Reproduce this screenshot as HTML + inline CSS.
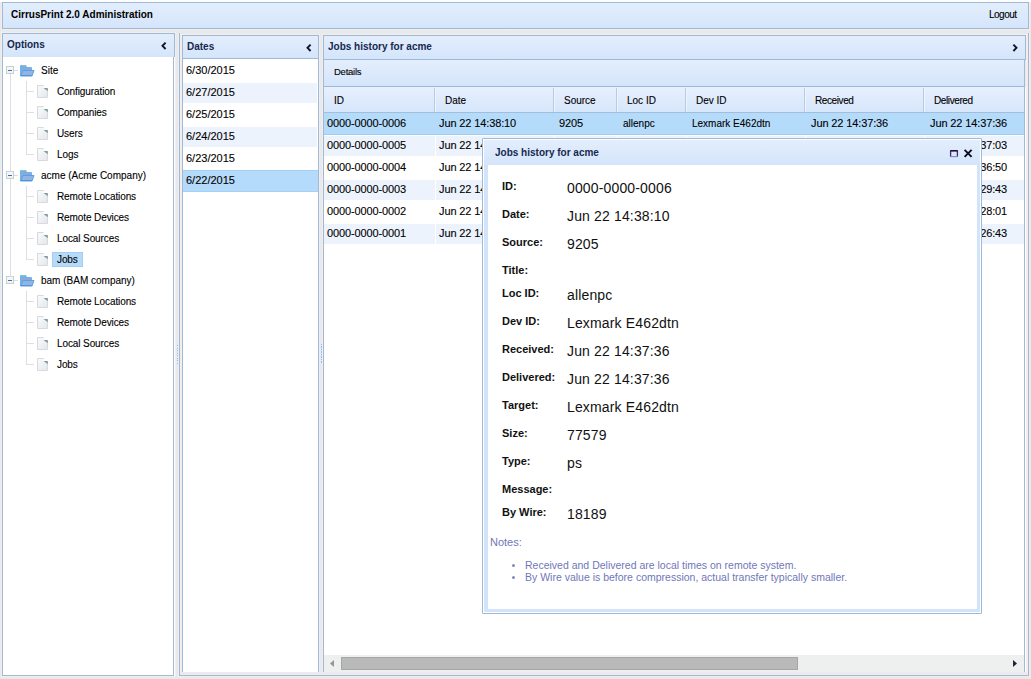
<!DOCTYPE html>
<html><head><meta charset="utf-8"><title>CirrusPrint 2.0 Administration</title>
<style>html,body{margin:0;padding:0;} body{width:1031px;height:679px;overflow:hidden;position:relative;background:#e9e9e9;font-family:'Liberation Sans', sans-serif;}</style>
</head><body>
<div style="position:absolute;left:0px;top:0px;width:1031px;height:2px;background:#fdfdfd"></div>
<div style="position:absolute;left:1px;top:2px;width:1px;height:27px;background:#f1eeed"></div>
<div style="position:absolute;left:1029px;top:2px;width:1px;height:27px;background:#f1eeed"></div>
<div style="position:absolute;left:1px;top:29px;width:1029px;height:1px;background:#f1eeed"></div>
<div style="position:absolute;left:1px;top:32px;width:175px;height:1px;background:#f1eeed"></div>
<div style="position:absolute;left:1px;top:33px;width:1px;height:644px;background:#f1eeed"></div>
<div style="position:absolute;left:175px;top:33px;width:1px;height:644px;background:#f1eeed"></div>
<div style="position:absolute;left:1px;top:676px;width:175px;height:1px;background:#f1eeed"></div>
<div style="position:absolute;left:178px;top:33px;width:1px;height:644px;background:#f1eeed"></div>
<div style="position:absolute;left:180px;top:33px;width:1px;height:642px;background:#f1eeed"></div>
<div style="position:absolute;left:181px;top:34px;width:139px;height:1px;background:#f1eeed"></div>
<div style="position:absolute;left:181px;top:35px;width:1px;height:638px;background:#f1eeed"></div>
<div style="position:absolute;left:319px;top:35px;width:1px;height:638px;background:#f1eeed"></div>
<div style="position:absolute;left:322px;top:34px;width:705px;height:1px;background:#f1eeed"></div>
<div style="position:absolute;left:322px;top:35px;width:1px;height:638px;background:#f1eeed"></div>
<div style="position:absolute;left:1026px;top:35px;width:1px;height:638px;background:#f1eeed"></div>
<div style="position:absolute;left:1027px;top:33px;width:1px;height:642px;background:#f1eeed"></div>
<div style="position:absolute;left:1029px;top:33px;width:1px;height:644px;background:#f1eeed"></div>
<div style="position:absolute;left:180px;top:674px;width:848px;height:1px;background:#f1eeed"></div>
<div style="position:absolute;left:178px;top:676px;width:852px;height:1px;background:#f1eeed"></div>
<div style="position:absolute;left:180px;top:672px;width:848px;height:1px;background:#ececec"></div>
<div style="position:absolute;left:177px;top:345px;width:1px;height:20px;background:repeating-linear-gradient(to bottom,#8dbdec 0 1.3px,transparent 1.3px 2.5px)"></div>
<div style="position:absolute;left:321px;top:344px;width:1px;height:20px;background:repeating-linear-gradient(to bottom,#8dbdec 0 1.3px,transparent 1.3px 2.5px)"></div>
<div style="position:absolute;left:2px;top:2px;width:1027px;height:27px;box-sizing:border-box;border:1px solid #9fbad8;background:linear-gradient(to bottom,#e3eefc,#d4e5fb)"></div>
<div style="position:absolute;left:11px;top:10px;font:bold 10px/10px 'Liberation Sans', sans-serif;color:#000;white-space:nowrap;">CirrusPrint 2.0 Administration</div>
<div style="position:absolute;left:989px;top:10px;font:normal 10px/10px 'Liberation Sans', sans-serif;color:#000;white-space:nowrap;-webkit-text-stroke:0.1px #000;letter-spacing:-0.5px">Logout</div>
<div style="position:absolute;left:2px;top:33px;width:173px;height:24px;box-sizing:border-box;border:1px solid #9fbad8;border-bottom:none;background:linear-gradient(to bottom,#e3eefc,#d4e5fb)"></div>
<div style="position:absolute;left:7px;top:40px;font:bold 10px/10px 'Liberation Sans', sans-serif;color:#16284f;white-space:nowrap;">Options</div>
<div style="position:absolute;left:2px;top:57px;width:172px;height:619px;box-sizing:border-box;border:1px solid #9fbad8;border-top:none;background:#fff"></div>
<div style="position:absolute;left:174px;top:57px;width:1px;height:619px;background:#ffffff"></div>
<div style="position:absolute;left:179px;top:33px;width:1px;height:643px;background:#9fbad8"></div>
<div style="position:absolute;left:179px;top:675px;width:850px;height:1px;background:#9fbad8"></div>
<div style="position:absolute;left:1028px;top:33px;width:1px;height:643px;background:#9fbad8"></div>
<div style="position:absolute;left:182px;top:35px;width:137px;height:24px;box-sizing:border-box;border:1px solid #9fbad8;background:linear-gradient(to bottom,#e3eefc,#d4e5fb)"></div>
<div style="position:absolute;left:187px;top:42px;font:bold 10px/10px 'Liberation Sans', sans-serif;color:#16284f;white-space:nowrap;">Dates</div>
<div style="position:absolute;left:182px;top:59px;width:137px;height:613px;box-sizing:border-box;border:1px solid #9fbad8;border-top:none;border-bottom:none;background:#fff"></div>
<div style="position:absolute;left:186px;top:65px;font:normal 11px/11px 'Liberation Sans', sans-serif;color:#000;white-space:nowrap;-webkit-text-stroke:0.1px #000;">6/30/2015</div>
<div style="position:absolute;left:183px;top:83px;width:134px;height:20px;background:#ecf3fd"></div>
<div style="position:absolute;left:186px;top:87px;font:normal 11px/11px 'Liberation Sans', sans-serif;color:#000;white-space:nowrap;-webkit-text-stroke:0.1px #000;">6/27/2015</div>
<div style="position:absolute;left:186px;top:109px;font:normal 11px/11px 'Liberation Sans', sans-serif;color:#000;white-space:nowrap;-webkit-text-stroke:0.1px #000;">6/25/2015</div>
<div style="position:absolute;left:183px;top:127px;width:134px;height:20px;background:#ecf3fd"></div>
<div style="position:absolute;left:186px;top:131px;font:normal 11px/11px 'Liberation Sans', sans-serif;color:#000;white-space:nowrap;-webkit-text-stroke:0.1px #000;">6/24/2015</div>
<div style="position:absolute;left:186px;top:153px;font:normal 11px/11px 'Liberation Sans', sans-serif;color:#000;white-space:nowrap;-webkit-text-stroke:0.1px #000;">6/23/2015</div>
<div style="position:absolute;left:183px;top:170px;width:135px;height:22px;background:#b5dbfb"></div>
<div style="position:absolute;left:183px;top:170px;width:135px;height:1px;background:#a3d0f4"></div>
<div style="position:absolute;left:183px;top:191px;width:135px;height:1px;background:#a3d0f4"></div>
<div style="position:absolute;left:186px;top:175px;font:normal 11px/11px 'Liberation Sans', sans-serif;color:#000;white-space:nowrap;-webkit-text-stroke:0.1px #000;">6/22/2015</div>
<div style="position:absolute;left:323px;top:35px;width:703px;height:25px;box-sizing:border-box;border:1px solid #9fbad8;background:linear-gradient(to bottom,#e3eefc,#d4e5fb)"></div>
<div style="position:absolute;left:328px;top:42px;font:bold 10px/10px 'Liberation Sans', sans-serif;color:#16284f;white-space:nowrap;">Jobs history for acme</div>
<div style="position:absolute;left:323px;top:60px;width:702px;height:27px;box-sizing:border-box;border:1px solid #9fbad8;border-top:none;background:linear-gradient(to bottom,#e3eefc,#d4e5fb)"></div>
<div style="position:absolute;left:334px;top:67px;font:normal 9.5px/9.5px 'Liberation Sans', sans-serif;color:#000;white-space:nowrap;-webkit-text-stroke:0.1px #000;letter-spacing:-0.25px">Details</div>
<div style="position:absolute;left:323px;top:87px;width:702px;height:585px;box-sizing:border-box;border-left:1px solid #9fbad8;border-right:1px solid #9fbad8;background:#fff"></div>
<div style="position:absolute;left:1025px;top:87px;width:1px;height:585px;background:#fff"></div>
<div style="position:absolute;left:324px;top:87px;width:700px;height:26px;background:linear-gradient(to bottom,#e7f0fd,#d6e6fb);border-bottom:1px solid #a3bedc;box-sizing:border-box"></div>
<div style="position:absolute;left:334px;top:96px;font:normal 10px/10px 'Liberation Sans', sans-serif;color:#000;white-space:nowrap;-webkit-text-stroke:0.1px #000;">ID</div>
<div style="position:absolute;left:434px;top:88px;width:1px;height:24px;background:#b9cbe3"></div>
<div style="position:absolute;left:435px;top:88px;width:1px;height:24px;background:#eef4fc"></div>
<div style="position:absolute;left:445px;top:96px;font:normal 10px/10px 'Liberation Sans', sans-serif;color:#000;white-space:nowrap;-webkit-text-stroke:0.1px #000;">Date</div>
<div style="position:absolute;left:553px;top:88px;width:1px;height:24px;background:#b9cbe3"></div>
<div style="position:absolute;left:554px;top:88px;width:1px;height:24px;background:#eef4fc"></div>
<div style="position:absolute;left:564px;top:96px;font:normal 10px/10px 'Liberation Sans', sans-serif;color:#000;white-space:nowrap;-webkit-text-stroke:0.1px #000;">Source</div>
<div style="position:absolute;left:616px;top:88px;width:1px;height:24px;background:#b9cbe3"></div>
<div style="position:absolute;left:617px;top:88px;width:1px;height:24px;background:#eef4fc"></div>
<div style="position:absolute;left:627px;top:96px;font:normal 10px/10px 'Liberation Sans', sans-serif;color:#000;white-space:nowrap;-webkit-text-stroke:0.1px #000;">Loc ID</div>
<div style="position:absolute;left:685px;top:88px;width:1px;height:24px;background:#b9cbe3"></div>
<div style="position:absolute;left:686px;top:88px;width:1px;height:24px;background:#eef4fc"></div>
<div style="position:absolute;left:696px;top:96px;font:normal 10px/10px 'Liberation Sans', sans-serif;color:#000;white-space:nowrap;-webkit-text-stroke:0.1px #000;">Dev ID</div>
<div style="position:absolute;left:804px;top:88px;width:1px;height:24px;background:#b9cbe3"></div>
<div style="position:absolute;left:805px;top:88px;width:1px;height:24px;background:#eef4fc"></div>
<div style="position:absolute;left:815px;top:96px;font:normal 10px/10px 'Liberation Sans', sans-serif;color:#000;white-space:nowrap;-webkit-text-stroke:0.1px #000;letter-spacing:-0.4px">Received</div>
<div style="position:absolute;left:923px;top:88px;width:1px;height:24px;background:#b9cbe3"></div>
<div style="position:absolute;left:924px;top:88px;width:1px;height:24px;background:#eef4fc"></div>
<div style="position:absolute;left:934px;top:96px;font:normal 10px/10px 'Liberation Sans', sans-serif;color:#000;white-space:nowrap;-webkit-text-stroke:0.1px #000;letter-spacing:-0.4px">Delivered</div>
<div style="position:absolute;left:324px;top:113px;width:700px;height:22px;background:#b5dbfb"></div>
<div style="position:absolute;left:324px;top:134px;width:700px;height:1px;background:#9fcdf0"></div>
<div style="position:absolute;left:327px;top:118px;font:normal 11px/11px 'Liberation Sans', sans-serif;color:#000;white-space:nowrap;-webkit-text-stroke:0.1px #000;letter-spacing:-0.12px">0000-0000-0006</div>
<div style="position:absolute;left:439px;top:118px;font:normal 11px/11px 'Liberation Sans', sans-serif;color:#000;white-space:nowrap;-webkit-text-stroke:0.1px #000;letter-spacing:-0.12px">Jun 22 14:38:10</div>
<div style="position:absolute;left:559px;top:118px;font:normal 11px/11px 'Liberation Sans', sans-serif;color:#000;white-space:nowrap;-webkit-text-stroke:0.1px #000;letter-spacing:-0.12px">9205</div>
<div style="position:absolute;left:623px;top:119px;font:normal 10px/10px 'Liberation Sans', sans-serif;color:#000;white-space:nowrap;-webkit-text-stroke:0.1px #000;">allenpc</div>
<div style="position:absolute;left:692px;top:119px;font:normal 10px/10px 'Liberation Sans', sans-serif;color:#000;white-space:nowrap;-webkit-text-stroke:0.1px #000;">Lexmark E462dtn</div>
<div style="position:absolute;left:811px;top:118px;font:normal 11px/11px 'Liberation Sans', sans-serif;color:#000;white-space:nowrap;-webkit-text-stroke:0.1px #000;letter-spacing:-0.12px">Jun 22 14:37:36</div>
<div style="position:absolute;left:930px;top:118px;font:normal 11px/11px 'Liberation Sans', sans-serif;color:#000;white-space:nowrap;-webkit-text-stroke:0.1px #000;letter-spacing:-0.12px">Jun 22 14:37:36</div>
<div style="position:absolute;left:324px;top:136px;width:700px;height:20px;background:#ecf3fd"></div>
<div style="position:absolute;left:327px;top:140px;font:normal 11px/11px 'Liberation Sans', sans-serif;color:#000;white-space:nowrap;-webkit-text-stroke:0.1px #000;letter-spacing:-0.12px">0000-0000-0005</div>
<div style="position:absolute;left:435px;top:136px;width:1px;height:20px;background:#ffffff"></div>
<div style="position:absolute;left:439px;top:140px;font:normal 11px/11px 'Liberation Sans', sans-serif;color:#000;white-space:nowrap;-webkit-text-stroke:0.1px #000;letter-spacing:-0.12px">Jun 22 14:37:10</div>
<div style="position:absolute;left:554px;top:136px;width:1px;height:20px;background:#ffffff"></div>
<div style="position:absolute;left:559px;top:140px;font:normal 11px/11px 'Liberation Sans', sans-serif;color:#000;white-space:nowrap;-webkit-text-stroke:0.1px #000;letter-spacing:-0.12px">9205</div>
<div style="position:absolute;left:617px;top:136px;width:1px;height:20px;background:#ffffff"></div>
<div style="position:absolute;left:623px;top:141px;font:normal 10px/10px 'Liberation Sans', sans-serif;color:#000;white-space:nowrap;-webkit-text-stroke:0.1px #000;">allenpc</div>
<div style="position:absolute;left:686px;top:136px;width:1px;height:20px;background:#ffffff"></div>
<div style="position:absolute;left:692px;top:141px;font:normal 10px/10px 'Liberation Sans', sans-serif;color:#000;white-space:nowrap;-webkit-text-stroke:0.1px #000;">Lexmark E462dtn</div>
<div style="position:absolute;left:805px;top:136px;width:1px;height:20px;background:#ffffff"></div>
<div style="position:absolute;left:811px;top:140px;font:normal 11px/11px 'Liberation Sans', sans-serif;color:#000;white-space:nowrap;-webkit-text-stroke:0.1px #000;letter-spacing:-0.12px">Jun 22 14:37:03</div>
<div style="position:absolute;left:924px;top:136px;width:1px;height:20px;background:#ffffff"></div>
<div style="position:absolute;left:930px;top:140px;font:normal 11px/11px 'Liberation Sans', sans-serif;color:#000;white-space:nowrap;-webkit-text-stroke:0.1px #000;letter-spacing:-0.12px">Jun 22 14:37:03</div>
<div style="position:absolute;left:327px;top:162px;font:normal 11px/11px 'Liberation Sans', sans-serif;color:#000;white-space:nowrap;-webkit-text-stroke:0.1px #000;letter-spacing:-0.12px">0000-0000-0004</div>
<div style="position:absolute;left:435px;top:158px;width:1px;height:20px;background:#ffffff"></div>
<div style="position:absolute;left:439px;top:162px;font:normal 11px/11px 'Liberation Sans', sans-serif;color:#000;white-space:nowrap;-webkit-text-stroke:0.1px #000;letter-spacing:-0.12px">Jun 22 14:36:10</div>
<div style="position:absolute;left:554px;top:158px;width:1px;height:20px;background:#ffffff"></div>
<div style="position:absolute;left:559px;top:162px;font:normal 11px/11px 'Liberation Sans', sans-serif;color:#000;white-space:nowrap;-webkit-text-stroke:0.1px #000;letter-spacing:-0.12px">9205</div>
<div style="position:absolute;left:617px;top:158px;width:1px;height:20px;background:#ffffff"></div>
<div style="position:absolute;left:623px;top:163px;font:normal 10px/10px 'Liberation Sans', sans-serif;color:#000;white-space:nowrap;-webkit-text-stroke:0.1px #000;">allenpc</div>
<div style="position:absolute;left:686px;top:158px;width:1px;height:20px;background:#ffffff"></div>
<div style="position:absolute;left:692px;top:163px;font:normal 10px/10px 'Liberation Sans', sans-serif;color:#000;white-space:nowrap;-webkit-text-stroke:0.1px #000;">Lexmark E462dtn</div>
<div style="position:absolute;left:805px;top:158px;width:1px;height:20px;background:#ffffff"></div>
<div style="position:absolute;left:811px;top:162px;font:normal 11px/11px 'Liberation Sans', sans-serif;color:#000;white-space:nowrap;-webkit-text-stroke:0.1px #000;letter-spacing:-0.12px">Jun 22 14:36:50</div>
<div style="position:absolute;left:924px;top:158px;width:1px;height:20px;background:#ffffff"></div>
<div style="position:absolute;left:930px;top:162px;font:normal 11px/11px 'Liberation Sans', sans-serif;color:#000;white-space:nowrap;-webkit-text-stroke:0.1px #000;letter-spacing:-0.12px">Jun 22 14:36:50</div>
<div style="position:absolute;left:324px;top:180px;width:700px;height:20px;background:#ecf3fd"></div>
<div style="position:absolute;left:327px;top:184px;font:normal 11px/11px 'Liberation Sans', sans-serif;color:#000;white-space:nowrap;-webkit-text-stroke:0.1px #000;letter-spacing:-0.12px">0000-0000-0003</div>
<div style="position:absolute;left:435px;top:180px;width:1px;height:20px;background:#ffffff"></div>
<div style="position:absolute;left:439px;top:184px;font:normal 11px/11px 'Liberation Sans', sans-serif;color:#000;white-space:nowrap;-webkit-text-stroke:0.1px #000;letter-spacing:-0.12px">Jun 22 14:29:10</div>
<div style="position:absolute;left:554px;top:180px;width:1px;height:20px;background:#ffffff"></div>
<div style="position:absolute;left:559px;top:184px;font:normal 11px/11px 'Liberation Sans', sans-serif;color:#000;white-space:nowrap;-webkit-text-stroke:0.1px #000;letter-spacing:-0.12px">9205</div>
<div style="position:absolute;left:617px;top:180px;width:1px;height:20px;background:#ffffff"></div>
<div style="position:absolute;left:623px;top:185px;font:normal 10px/10px 'Liberation Sans', sans-serif;color:#000;white-space:nowrap;-webkit-text-stroke:0.1px #000;">allenpc</div>
<div style="position:absolute;left:686px;top:180px;width:1px;height:20px;background:#ffffff"></div>
<div style="position:absolute;left:692px;top:185px;font:normal 10px/10px 'Liberation Sans', sans-serif;color:#000;white-space:nowrap;-webkit-text-stroke:0.1px #000;">Lexmark E462dtn</div>
<div style="position:absolute;left:805px;top:180px;width:1px;height:20px;background:#ffffff"></div>
<div style="position:absolute;left:811px;top:184px;font:normal 11px/11px 'Liberation Sans', sans-serif;color:#000;white-space:nowrap;-webkit-text-stroke:0.1px #000;letter-spacing:-0.12px">Jun 22 14:29:43</div>
<div style="position:absolute;left:924px;top:180px;width:1px;height:20px;background:#ffffff"></div>
<div style="position:absolute;left:930px;top:184px;font:normal 11px/11px 'Liberation Sans', sans-serif;color:#000;white-space:nowrap;-webkit-text-stroke:0.1px #000;letter-spacing:-0.12px">Jun 22 14:29:43</div>
<div style="position:absolute;left:327px;top:206px;font:normal 11px/11px 'Liberation Sans', sans-serif;color:#000;white-space:nowrap;-webkit-text-stroke:0.1px #000;letter-spacing:-0.12px">0000-0000-0002</div>
<div style="position:absolute;left:435px;top:202px;width:1px;height:20px;background:#ffffff"></div>
<div style="position:absolute;left:439px;top:206px;font:normal 11px/11px 'Liberation Sans', sans-serif;color:#000;white-space:nowrap;-webkit-text-stroke:0.1px #000;letter-spacing:-0.12px">Jun 22 14:28:10</div>
<div style="position:absolute;left:554px;top:202px;width:1px;height:20px;background:#ffffff"></div>
<div style="position:absolute;left:559px;top:206px;font:normal 11px/11px 'Liberation Sans', sans-serif;color:#000;white-space:nowrap;-webkit-text-stroke:0.1px #000;letter-spacing:-0.12px">9205</div>
<div style="position:absolute;left:617px;top:202px;width:1px;height:20px;background:#ffffff"></div>
<div style="position:absolute;left:623px;top:207px;font:normal 10px/10px 'Liberation Sans', sans-serif;color:#000;white-space:nowrap;-webkit-text-stroke:0.1px #000;">allenpc</div>
<div style="position:absolute;left:686px;top:202px;width:1px;height:20px;background:#ffffff"></div>
<div style="position:absolute;left:692px;top:207px;font:normal 10px/10px 'Liberation Sans', sans-serif;color:#000;white-space:nowrap;-webkit-text-stroke:0.1px #000;">Lexmark E462dtn</div>
<div style="position:absolute;left:805px;top:202px;width:1px;height:20px;background:#ffffff"></div>
<div style="position:absolute;left:811px;top:206px;font:normal 11px/11px 'Liberation Sans', sans-serif;color:#000;white-space:nowrap;-webkit-text-stroke:0.1px #000;letter-spacing:-0.12px">Jun 22 14:28:01</div>
<div style="position:absolute;left:924px;top:202px;width:1px;height:20px;background:#ffffff"></div>
<div style="position:absolute;left:930px;top:206px;font:normal 11px/11px 'Liberation Sans', sans-serif;color:#000;white-space:nowrap;-webkit-text-stroke:0.1px #000;letter-spacing:-0.12px">Jun 22 14:28:01</div>
<div style="position:absolute;left:324px;top:224px;width:700px;height:20px;background:#ecf3fd"></div>
<div style="position:absolute;left:327px;top:228px;font:normal 11px/11px 'Liberation Sans', sans-serif;color:#000;white-space:nowrap;-webkit-text-stroke:0.1px #000;letter-spacing:-0.12px">0000-0000-0001</div>
<div style="position:absolute;left:435px;top:224px;width:1px;height:20px;background:#ffffff"></div>
<div style="position:absolute;left:439px;top:228px;font:normal 11px/11px 'Liberation Sans', sans-serif;color:#000;white-space:nowrap;-webkit-text-stroke:0.1px #000;letter-spacing:-0.12px">Jun 22 14:26:10</div>
<div style="position:absolute;left:554px;top:224px;width:1px;height:20px;background:#ffffff"></div>
<div style="position:absolute;left:559px;top:228px;font:normal 11px/11px 'Liberation Sans', sans-serif;color:#000;white-space:nowrap;-webkit-text-stroke:0.1px #000;letter-spacing:-0.12px">9205</div>
<div style="position:absolute;left:617px;top:224px;width:1px;height:20px;background:#ffffff"></div>
<div style="position:absolute;left:623px;top:229px;font:normal 10px/10px 'Liberation Sans', sans-serif;color:#000;white-space:nowrap;-webkit-text-stroke:0.1px #000;">allenpc</div>
<div style="position:absolute;left:686px;top:224px;width:1px;height:20px;background:#ffffff"></div>
<div style="position:absolute;left:692px;top:229px;font:normal 10px/10px 'Liberation Sans', sans-serif;color:#000;white-space:nowrap;-webkit-text-stroke:0.1px #000;">Lexmark E462dtn</div>
<div style="position:absolute;left:805px;top:224px;width:1px;height:20px;background:#ffffff"></div>
<div style="position:absolute;left:811px;top:228px;font:normal 11px/11px 'Liberation Sans', sans-serif;color:#000;white-space:nowrap;-webkit-text-stroke:0.1px #000;letter-spacing:-0.12px">Jun 22 14:26:43</div>
<div style="position:absolute;left:924px;top:224px;width:1px;height:20px;background:#ffffff"></div>
<div style="position:absolute;left:930px;top:228px;font:normal 11px/11px 'Liberation Sans', sans-serif;color:#000;white-space:nowrap;-webkit-text-stroke:0.1px #000;letter-spacing:-0.12px">Jun 22 14:26:43</div>
<div style="position:absolute;left:324px;top:655px;width:700px;height:17px;background:#eef0f0"></div>
<svg style="position:absolute;left:329px;top:659px" width="8" height="10"><path d="M5 1 L1 4.5 L5 8 Z" fill="#959595"/></svg>
<div style="position:absolute;left:341px;top:657px;width:457px;height:13px;box-sizing:border-box;background:#b9b9b9;border:1px solid #a6a6a6"></div>
<svg style="position:absolute;left:1012px;top:659px" width="8" height="10"><path d="M1 1 L5 4.5 L1 8 Z" fill="#2a1f3d"/></svg>
<svg style="position:absolute;left:156px;top:38px" width="16" height="16"><path d="M9.6 4.6 L6.5 7.8 L9.6 11" fill="none" stroke="#141428" stroke-width="1.9"/></svg>
<svg style="position:absolute;left:301px;top:40px" width="16" height="16"><path d="M9.6 4.6 L6.5 7.8 L9.6 11" fill="none" stroke="#141428" stroke-width="1.9"/></svg>
<svg style="position:absolute;left:1007px;top:40px" width="16" height="16"><path d="M6.4 4.6 L9.5 7.8 L6.4 11" fill="none" stroke="#141428" stroke-width="1.9"/></svg>
<svg style="position:absolute;left:6px;top:66px" width="8" height="8" viewBox="0 0 8 8"><defs><linearGradient id="eg" x1="0" y1="0" x2="0" y2="1"><stop offset="0" stop-color="#f8fbfc"/><stop offset="1" stop-color="#eef2f2"/></linearGradient></defs><rect x="0.5" y="0.5" width="7" height="7" fill="url(#eg)" stroke="#c6d0cc"/><path d="M2 4.5 L6 4.5" stroke="#4a68bf" stroke-width="1"/></svg>
<div style="position:absolute;left:14px;top:70px;width:4px;height:1px;background:#dcdfe4"></div>
<svg style="position:absolute;left:20px;top:65px" width="15" height="12" viewBox="0 0 15 12"><path d="M0 1.2 Q0 0 1.2 0 L6 0 L7 2 L11 2 Q12 2 12 3 L12 11 L0 11 Z" fill="#70b2ee"/><path d="M2 0.5 H5.5" stroke="#9cc4a8" stroke-width="1"/><rect x="1.5" y="3" width="9.5" height="7" fill="#8ba9d8"/><path d="M3 5.5 L14 5.5 L12 11 L0.5 11 Z" fill="#92b4e0"/><path d="M3 5.5 L14 5.5 L12 11 L0.5 11 Z" fill="none" stroke="#5d9fe6" stroke-width="1"/><path d="M1 10.5 H11.5" stroke="#4d95e2" stroke-width="1"/></svg>
<div style="position:absolute;left:41px;top:66px;font:normal 10px/10px 'Liberation Sans', sans-serif;color:#000;white-space:nowrap;-webkit-text-stroke:0.1px #000;">Site</div>
<div style="position:absolute;left:26px;top:81px;width:1px;height:21px;background:#dcdfe4"></div>
<div style="position:absolute;left:27px;top:91px;width:7px;height:1px;background:#dcdfe4"></div>
<svg style="position:absolute;left:37px;top:85px" width="12" height="14" viewBox="0 0 12 14"><defs><linearGradient id="lg" x1="0" y1="0" x2="1" y2="1"><stop offset="0" stop-color="#fafbfc"/><stop offset="1" stop-color="#e4e7ea"/></linearGradient></defs><path d="M0.5 0.5 L6.5 0.5 L10.5 4.5 L10.5 12.5 L0.5 12.5 Z" fill="url(#lg)" stroke="#d6dae0"/><path d="M6.5 0.5 L6.5 3.5 L10.5 3.5 Z" fill="#ffffff"/><path d="M6.5 3 L10.5 3 L10.5 6 Z" fill="#8595a8"/><path d="M10 3.5 L10.5 3.5 L10.5 6" fill="none" stroke="#8fb0a0" stroke-width="1"/></svg>
<div style="position:absolute;left:57px;top:87px;font:normal 10px/10px 'Liberation Sans', sans-serif;color:#000;white-space:nowrap;-webkit-text-stroke:0.1px #000;letter-spacing:-0.1px">Configuration</div>
<div style="position:absolute;left:26px;top:102px;width:1px;height:21px;background:#dcdfe4"></div>
<div style="position:absolute;left:27px;top:112px;width:7px;height:1px;background:#dcdfe4"></div>
<svg style="position:absolute;left:37px;top:106px" width="12" height="14" viewBox="0 0 12 14"><defs><linearGradient id="lg" x1="0" y1="0" x2="1" y2="1"><stop offset="0" stop-color="#fafbfc"/><stop offset="1" stop-color="#e4e7ea"/></linearGradient></defs><path d="M0.5 0.5 L6.5 0.5 L10.5 4.5 L10.5 12.5 L0.5 12.5 Z" fill="url(#lg)" stroke="#d6dae0"/><path d="M6.5 0.5 L6.5 3.5 L10.5 3.5 Z" fill="#ffffff"/><path d="M6.5 3 L10.5 3 L10.5 6 Z" fill="#8595a8"/><path d="M10 3.5 L10.5 3.5 L10.5 6" fill="none" stroke="#8fb0a0" stroke-width="1"/></svg>
<div style="position:absolute;left:57px;top:108px;font:normal 10px/10px 'Liberation Sans', sans-serif;color:#000;white-space:nowrap;-webkit-text-stroke:0.1px #000;letter-spacing:-0.1px">Companies</div>
<div style="position:absolute;left:26px;top:123px;width:1px;height:21px;background:#dcdfe4"></div>
<div style="position:absolute;left:27px;top:133px;width:7px;height:1px;background:#dcdfe4"></div>
<svg style="position:absolute;left:37px;top:127px" width="12" height="14" viewBox="0 0 12 14"><defs><linearGradient id="lg" x1="0" y1="0" x2="1" y2="1"><stop offset="0" stop-color="#fafbfc"/><stop offset="1" stop-color="#e4e7ea"/></linearGradient></defs><path d="M0.5 0.5 L6.5 0.5 L10.5 4.5 L10.5 12.5 L0.5 12.5 Z" fill="url(#lg)" stroke="#d6dae0"/><path d="M6.5 0.5 L6.5 3.5 L10.5 3.5 Z" fill="#ffffff"/><path d="M6.5 3 L10.5 3 L10.5 6 Z" fill="#8595a8"/><path d="M10 3.5 L10.5 3.5 L10.5 6" fill="none" stroke="#8fb0a0" stroke-width="1"/></svg>
<div style="position:absolute;left:57px;top:129px;font:normal 10px/10px 'Liberation Sans', sans-serif;color:#000;white-space:nowrap;-webkit-text-stroke:0.1px #000;letter-spacing:-0.1px">Users</div>
<div style="position:absolute;left:26px;top:144px;width:1px;height:11px;background:#dcdfe4"></div>
<div style="position:absolute;left:27px;top:154px;width:7px;height:1px;background:#dcdfe4"></div>
<svg style="position:absolute;left:37px;top:148px" width="12" height="14" viewBox="0 0 12 14"><defs><linearGradient id="lg" x1="0" y1="0" x2="1" y2="1"><stop offset="0" stop-color="#fafbfc"/><stop offset="1" stop-color="#e4e7ea"/></linearGradient></defs><path d="M0.5 0.5 L6.5 0.5 L10.5 4.5 L10.5 12.5 L0.5 12.5 Z" fill="url(#lg)" stroke="#d6dae0"/><path d="M6.5 0.5 L6.5 3.5 L10.5 3.5 Z" fill="#ffffff"/><path d="M6.5 3 L10.5 3 L10.5 6 Z" fill="#8595a8"/><path d="M10 3.5 L10.5 3.5 L10.5 6" fill="none" stroke="#8fb0a0" stroke-width="1"/></svg>
<div style="position:absolute;left:57px;top:150px;font:normal 10px/10px 'Liberation Sans', sans-serif;color:#000;white-space:nowrap;-webkit-text-stroke:0.1px #000;letter-spacing:-0.1px">Logs</div>
<svg style="position:absolute;left:6px;top:171px" width="8" height="8" viewBox="0 0 8 8"><defs><linearGradient id="eg" x1="0" y1="0" x2="0" y2="1"><stop offset="0" stop-color="#f8fbfc"/><stop offset="1" stop-color="#eef2f2"/></linearGradient></defs><rect x="0.5" y="0.5" width="7" height="7" fill="url(#eg)" stroke="#c6d0cc"/><path d="M2 4.5 L6 4.5" stroke="#4a68bf" stroke-width="1"/></svg>
<div style="position:absolute;left:14px;top:175px;width:4px;height:1px;background:#dcdfe4"></div>
<svg style="position:absolute;left:20px;top:170px" width="15" height="12" viewBox="0 0 15 12"><path d="M0 1.2 Q0 0 1.2 0 L6 0 L7 2 L11 2 Q12 2 12 3 L12 11 L0 11 Z" fill="#70b2ee"/><path d="M2 0.5 H5.5" stroke="#9cc4a8" stroke-width="1"/><rect x="1.5" y="3" width="9.5" height="7" fill="#8ba9d8"/><path d="M3 5.5 L14 5.5 L12 11 L0.5 11 Z" fill="#92b4e0"/><path d="M3 5.5 L14 5.5 L12 11 L0.5 11 Z" fill="none" stroke="#5d9fe6" stroke-width="1"/><path d="M1 10.5 H11.5" stroke="#4d95e2" stroke-width="1"/></svg>
<div style="position:absolute;left:41px;top:171px;font:normal 10px/10px 'Liberation Sans', sans-serif;color:#000;white-space:nowrap;-webkit-text-stroke:0.1px #000;">acme (Acme Company)</div>
<div style="position:absolute;left:26px;top:186px;width:1px;height:21px;background:#dcdfe4"></div>
<div style="position:absolute;left:27px;top:196px;width:7px;height:1px;background:#dcdfe4"></div>
<svg style="position:absolute;left:37px;top:190px" width="12" height="14" viewBox="0 0 12 14"><defs><linearGradient id="lg" x1="0" y1="0" x2="1" y2="1"><stop offset="0" stop-color="#fafbfc"/><stop offset="1" stop-color="#e4e7ea"/></linearGradient></defs><path d="M0.5 0.5 L6.5 0.5 L10.5 4.5 L10.5 12.5 L0.5 12.5 Z" fill="url(#lg)" stroke="#d6dae0"/><path d="M6.5 0.5 L6.5 3.5 L10.5 3.5 Z" fill="#ffffff"/><path d="M6.5 3 L10.5 3 L10.5 6 Z" fill="#8595a8"/><path d="M10 3.5 L10.5 3.5 L10.5 6" fill="none" stroke="#8fb0a0" stroke-width="1"/></svg>
<div style="position:absolute;left:57px;top:192px;font:normal 10px/10px 'Liberation Sans', sans-serif;color:#000;white-space:nowrap;-webkit-text-stroke:0.1px #000;letter-spacing:-0.1px">Remote Locations</div>
<div style="position:absolute;left:26px;top:207px;width:1px;height:21px;background:#dcdfe4"></div>
<div style="position:absolute;left:27px;top:217px;width:7px;height:1px;background:#dcdfe4"></div>
<svg style="position:absolute;left:37px;top:211px" width="12" height="14" viewBox="0 0 12 14"><defs><linearGradient id="lg" x1="0" y1="0" x2="1" y2="1"><stop offset="0" stop-color="#fafbfc"/><stop offset="1" stop-color="#e4e7ea"/></linearGradient></defs><path d="M0.5 0.5 L6.5 0.5 L10.5 4.5 L10.5 12.5 L0.5 12.5 Z" fill="url(#lg)" stroke="#d6dae0"/><path d="M6.5 0.5 L6.5 3.5 L10.5 3.5 Z" fill="#ffffff"/><path d="M6.5 3 L10.5 3 L10.5 6 Z" fill="#8595a8"/><path d="M10 3.5 L10.5 3.5 L10.5 6" fill="none" stroke="#8fb0a0" stroke-width="1"/></svg>
<div style="position:absolute;left:57px;top:213px;font:normal 10px/10px 'Liberation Sans', sans-serif;color:#000;white-space:nowrap;-webkit-text-stroke:0.1px #000;letter-spacing:-0.1px">Remote Devices</div>
<div style="position:absolute;left:26px;top:228px;width:1px;height:21px;background:#dcdfe4"></div>
<div style="position:absolute;left:27px;top:238px;width:7px;height:1px;background:#dcdfe4"></div>
<svg style="position:absolute;left:37px;top:232px" width="12" height="14" viewBox="0 0 12 14"><defs><linearGradient id="lg" x1="0" y1="0" x2="1" y2="1"><stop offset="0" stop-color="#fafbfc"/><stop offset="1" stop-color="#e4e7ea"/></linearGradient></defs><path d="M0.5 0.5 L6.5 0.5 L10.5 4.5 L10.5 12.5 L0.5 12.5 Z" fill="url(#lg)" stroke="#d6dae0"/><path d="M6.5 0.5 L6.5 3.5 L10.5 3.5 Z" fill="#ffffff"/><path d="M6.5 3 L10.5 3 L10.5 6 Z" fill="#8595a8"/><path d="M10 3.5 L10.5 3.5 L10.5 6" fill="none" stroke="#8fb0a0" stroke-width="1"/></svg>
<div style="position:absolute;left:57px;top:234px;font:normal 10px/10px 'Liberation Sans', sans-serif;color:#000;white-space:nowrap;-webkit-text-stroke:0.1px #000;letter-spacing:-0.1px">Local Sources</div>
<div style="position:absolute;left:26px;top:249px;width:1px;height:11px;background:#dcdfe4"></div>
<div style="position:absolute;left:27px;top:259px;width:7px;height:1px;background:#dcdfe4"></div>
<svg style="position:absolute;left:37px;top:253px" width="12" height="14" viewBox="0 0 12 14"><defs><linearGradient id="lg" x1="0" y1="0" x2="1" y2="1"><stop offset="0" stop-color="#fafbfc"/><stop offset="1" stop-color="#e4e7ea"/></linearGradient></defs><path d="M0.5 0.5 L6.5 0.5 L10.5 4.5 L10.5 12.5 L0.5 12.5 Z" fill="url(#lg)" stroke="#d6dae0"/><path d="M6.5 0.5 L6.5 3.5 L10.5 3.5 Z" fill="#ffffff"/><path d="M6.5 3 L10.5 3 L10.5 6 Z" fill="#8595a8"/><path d="M10 3.5 L10.5 3.5 L10.5 6" fill="none" stroke="#8fb0a0" stroke-width="1"/></svg>
<div style="position:absolute;left:52px;top:252px;width:31px;height:15px;box-sizing:border-box;background:#b5dbfb;border:1px solid #a3cdf2"></div>
<div style="position:absolute;left:57px;top:255px;font:normal 10px/10px 'Liberation Sans', sans-serif;color:#000;white-space:nowrap;-webkit-text-stroke:0.1px #000;letter-spacing:-0.1px">Jobs</div>
<svg style="position:absolute;left:6px;top:276px" width="8" height="8" viewBox="0 0 8 8"><defs><linearGradient id="eg" x1="0" y1="0" x2="0" y2="1"><stop offset="0" stop-color="#f8fbfc"/><stop offset="1" stop-color="#eef2f2"/></linearGradient></defs><rect x="0.5" y="0.5" width="7" height="7" fill="url(#eg)" stroke="#c6d0cc"/><path d="M2 4.5 L6 4.5" stroke="#4a68bf" stroke-width="1"/></svg>
<div style="position:absolute;left:14px;top:280px;width:4px;height:1px;background:#dcdfe4"></div>
<svg style="position:absolute;left:20px;top:275px" width="15" height="12" viewBox="0 0 15 12"><path d="M0 1.2 Q0 0 1.2 0 L6 0 L7 2 L11 2 Q12 2 12 3 L12 11 L0 11 Z" fill="#70b2ee"/><path d="M2 0.5 H5.5" stroke="#9cc4a8" stroke-width="1"/><rect x="1.5" y="3" width="9.5" height="7" fill="#8ba9d8"/><path d="M3 5.5 L14 5.5 L12 11 L0.5 11 Z" fill="#92b4e0"/><path d="M3 5.5 L14 5.5 L12 11 L0.5 11 Z" fill="none" stroke="#5d9fe6" stroke-width="1"/><path d="M1 10.5 H11.5" stroke="#4d95e2" stroke-width="1"/></svg>
<div style="position:absolute;left:41px;top:276px;font:normal 10px/10px 'Liberation Sans', sans-serif;color:#000;white-space:nowrap;-webkit-text-stroke:0.1px #000;">bam (BAM company)</div>
<div style="position:absolute;left:26px;top:291px;width:1px;height:21px;background:#dcdfe4"></div>
<div style="position:absolute;left:27px;top:301px;width:7px;height:1px;background:#dcdfe4"></div>
<svg style="position:absolute;left:37px;top:295px" width="12" height="14" viewBox="0 0 12 14"><defs><linearGradient id="lg" x1="0" y1="0" x2="1" y2="1"><stop offset="0" stop-color="#fafbfc"/><stop offset="1" stop-color="#e4e7ea"/></linearGradient></defs><path d="M0.5 0.5 L6.5 0.5 L10.5 4.5 L10.5 12.5 L0.5 12.5 Z" fill="url(#lg)" stroke="#d6dae0"/><path d="M6.5 0.5 L6.5 3.5 L10.5 3.5 Z" fill="#ffffff"/><path d="M6.5 3 L10.5 3 L10.5 6 Z" fill="#8595a8"/><path d="M10 3.5 L10.5 3.5 L10.5 6" fill="none" stroke="#8fb0a0" stroke-width="1"/></svg>
<div style="position:absolute;left:57px;top:297px;font:normal 10px/10px 'Liberation Sans', sans-serif;color:#000;white-space:nowrap;-webkit-text-stroke:0.1px #000;letter-spacing:-0.1px">Remote Locations</div>
<div style="position:absolute;left:26px;top:312px;width:1px;height:21px;background:#dcdfe4"></div>
<div style="position:absolute;left:27px;top:322px;width:7px;height:1px;background:#dcdfe4"></div>
<svg style="position:absolute;left:37px;top:316px" width="12" height="14" viewBox="0 0 12 14"><defs><linearGradient id="lg" x1="0" y1="0" x2="1" y2="1"><stop offset="0" stop-color="#fafbfc"/><stop offset="1" stop-color="#e4e7ea"/></linearGradient></defs><path d="M0.5 0.5 L6.5 0.5 L10.5 4.5 L10.5 12.5 L0.5 12.5 Z" fill="url(#lg)" stroke="#d6dae0"/><path d="M6.5 0.5 L6.5 3.5 L10.5 3.5 Z" fill="#ffffff"/><path d="M6.5 3 L10.5 3 L10.5 6 Z" fill="#8595a8"/><path d="M10 3.5 L10.5 3.5 L10.5 6" fill="none" stroke="#8fb0a0" stroke-width="1"/></svg>
<div style="position:absolute;left:57px;top:318px;font:normal 10px/10px 'Liberation Sans', sans-serif;color:#000;white-space:nowrap;-webkit-text-stroke:0.1px #000;letter-spacing:-0.1px">Remote Devices</div>
<div style="position:absolute;left:26px;top:333px;width:1px;height:21px;background:#dcdfe4"></div>
<div style="position:absolute;left:27px;top:343px;width:7px;height:1px;background:#dcdfe4"></div>
<svg style="position:absolute;left:37px;top:337px" width="12" height="14" viewBox="0 0 12 14"><defs><linearGradient id="lg" x1="0" y1="0" x2="1" y2="1"><stop offset="0" stop-color="#fafbfc"/><stop offset="1" stop-color="#e4e7ea"/></linearGradient></defs><path d="M0.5 0.5 L6.5 0.5 L10.5 4.5 L10.5 12.5 L0.5 12.5 Z" fill="url(#lg)" stroke="#d6dae0"/><path d="M6.5 0.5 L6.5 3.5 L10.5 3.5 Z" fill="#ffffff"/><path d="M6.5 3 L10.5 3 L10.5 6 Z" fill="#8595a8"/><path d="M10 3.5 L10.5 3.5 L10.5 6" fill="none" stroke="#8fb0a0" stroke-width="1"/></svg>
<div style="position:absolute;left:57px;top:339px;font:normal 10px/10px 'Liberation Sans', sans-serif;color:#000;white-space:nowrap;-webkit-text-stroke:0.1px #000;letter-spacing:-0.1px">Local Sources</div>
<div style="position:absolute;left:26px;top:354px;width:1px;height:11px;background:#dcdfe4"></div>
<div style="position:absolute;left:27px;top:364px;width:7px;height:1px;background:#dcdfe4"></div>
<svg style="position:absolute;left:37px;top:358px" width="12" height="14" viewBox="0 0 12 14"><defs><linearGradient id="lg" x1="0" y1="0" x2="1" y2="1"><stop offset="0" stop-color="#fafbfc"/><stop offset="1" stop-color="#e4e7ea"/></linearGradient></defs><path d="M0.5 0.5 L6.5 0.5 L10.5 4.5 L10.5 12.5 L0.5 12.5 Z" fill="url(#lg)" stroke="#d6dae0"/><path d="M6.5 0.5 L6.5 3.5 L10.5 3.5 Z" fill="#ffffff"/><path d="M6.5 3 L10.5 3 L10.5 6 Z" fill="#8595a8"/><path d="M10 3.5 L10.5 3.5 L10.5 6" fill="none" stroke="#8fb0a0" stroke-width="1"/></svg>
<div style="position:absolute;left:57px;top:360px;font:normal 10px/10px 'Liberation Sans', sans-serif;color:#000;white-space:nowrap;-webkit-text-stroke:0.1px #000;letter-spacing:-0.1px">Jobs</div>
<div style="position:absolute;left:10px;top:74px;width:1px;height:98px;background:#dcdfe4"></div>
<div style="position:absolute;left:10px;top:179px;width:1px;height:98px;background:#dcdfe4"></div>
<div style="position:absolute;left:482px;top:138px;width:500px;height:476px;box-sizing:border-box;border:1px solid #9fbad8;background:#d3e3f9;border-radius:1px"></div>
<div style="position:absolute;left:483px;top:139px;width:498px;height:474px;box-sizing:border-box;border:1px solid #fff"></div>
<div style="position:absolute;left:484px;top:140px;width:496px;height:25px;background:linear-gradient(to bottom,#e3eefc,#d4e5fb)"></div>
<div style="position:absolute;left:495px;top:148px;font:bold 10px/10px 'Liberation Sans', sans-serif;color:#16284f;white-space:nowrap;">Jobs history for acme</div>
<svg style="position:absolute;left:949px;top:149px" width="10" height="10" viewBox="0 0 10 10"><path d="M1.6 1.5 V7.8 M8.4 7.8 V1.5" fill="none" stroke="#5a2070" stroke-width="1.3"/><path d="M1.3 1.8 H8.7" stroke="#1a1030" stroke-width="1.6"/><path d="M1.2 7.6 H8.8" stroke="#7090c8" stroke-width="1.1"/></svg>
<svg style="position:absolute;left:963px;top:148px" width="11" height="11" viewBox="0 0 11 11"><path d="M1.6 1.8 L8.6 8.9 M8.6 1.8 L1.6 8.9" stroke="#0c0c1c" stroke-width="1.9"/></svg>
<div style="position:absolute;left:488px;top:165px;width:489px;height:444px;background:#fff"></div>
<div style="position:absolute;left:502px;top:181px;font:bold 11px/11px 'Liberation Sans', sans-serif;color:#111;white-space:nowrap;">ID:</div>
<div style="position:absolute;left:567px;top:181px;font:normal 14px/14px 'Liberation Sans', sans-serif;color:#111;white-space:nowrap;letter-spacing:0.15px">0000-0000-0006</div>
<div style="position:absolute;left:502px;top:209px;font:bold 11px/11px 'Liberation Sans', sans-serif;color:#111;white-space:nowrap;">Date:</div>
<div style="position:absolute;left:567px;top:209px;font:normal 14px/14px 'Liberation Sans', sans-serif;color:#111;white-space:nowrap;letter-spacing:0.15px">Jun 22 14:38:10</div>
<div style="position:absolute;left:502px;top:237px;font:bold 11px/11px 'Liberation Sans', sans-serif;color:#111;white-space:nowrap;">Source:</div>
<div style="position:absolute;left:567px;top:237px;font:normal 14px/14px 'Liberation Sans', sans-serif;color:#111;white-space:nowrap;letter-spacing:0.15px">9205</div>
<div style="position:absolute;left:502px;top:265px;font:bold 11px/11px 'Liberation Sans', sans-serif;color:#111;white-space:nowrap;">Title:</div>
<div style="position:absolute;left:502px;top:288px;font:bold 11px/11px 'Liberation Sans', sans-serif;color:#111;white-space:nowrap;">Loc ID:</div>
<div style="position:absolute;left:567px;top:288px;font:normal 14px/14px 'Liberation Sans', sans-serif;color:#111;white-space:nowrap;letter-spacing:0.15px">allenpc</div>
<div style="position:absolute;left:502px;top:316px;font:bold 11px/11px 'Liberation Sans', sans-serif;color:#111;white-space:nowrap;">Dev ID:</div>
<div style="position:absolute;left:567px;top:316px;font:normal 14px/14px 'Liberation Sans', sans-serif;color:#111;white-space:nowrap;letter-spacing:0.15px">Lexmark E462dtn</div>
<div style="position:absolute;left:502px;top:344px;font:bold 11px/11px 'Liberation Sans', sans-serif;color:#111;white-space:nowrap;">Received:</div>
<div style="position:absolute;left:567px;top:344px;font:normal 14px/14px 'Liberation Sans', sans-serif;color:#111;white-space:nowrap;letter-spacing:0.15px">Jun 22 14:37:36</div>
<div style="position:absolute;left:502px;top:372px;font:bold 11px/11px 'Liberation Sans', sans-serif;color:#111;white-space:nowrap;">Delivered:</div>
<div style="position:absolute;left:567px;top:372px;font:normal 14px/14px 'Liberation Sans', sans-serif;color:#111;white-space:nowrap;letter-spacing:0.15px">Jun 22 14:37:36</div>
<div style="position:absolute;left:502px;top:400px;font:bold 11px/11px 'Liberation Sans', sans-serif;color:#111;white-space:nowrap;">Target:</div>
<div style="position:absolute;left:567px;top:400px;font:normal 14px/14px 'Liberation Sans', sans-serif;color:#111;white-space:nowrap;letter-spacing:0.15px">Lexmark E462dtn</div>
<div style="position:absolute;left:502px;top:428px;font:bold 11px/11px 'Liberation Sans', sans-serif;color:#111;white-space:nowrap;">Size:</div>
<div style="position:absolute;left:567px;top:428px;font:normal 14px/14px 'Liberation Sans', sans-serif;color:#111;white-space:nowrap;letter-spacing:0.15px">77579</div>
<div style="position:absolute;left:502px;top:456px;font:bold 11px/11px 'Liberation Sans', sans-serif;color:#111;white-space:nowrap;">Type:</div>
<div style="position:absolute;left:567px;top:456px;font:normal 14px/14px 'Liberation Sans', sans-serif;color:#111;white-space:nowrap;letter-spacing:0.15px">ps</div>
<div style="position:absolute;left:502px;top:484px;font:bold 11px/11px 'Liberation Sans', sans-serif;color:#111;white-space:nowrap;">Message:</div>
<div style="position:absolute;left:502px;top:507px;font:bold 11px/11px 'Liberation Sans', sans-serif;color:#111;white-space:nowrap;">By Wire:</div>
<div style="position:absolute;left:567px;top:507px;font:normal 14px/14px 'Liberation Sans', sans-serif;color:#111;white-space:nowrap;letter-spacing:0.15px">18189</div>
<div style="position:absolute;left:490px;top:537px;font:normal 11px/11px 'Liberation Sans', sans-serif;color:#7077b9;white-space:nowrap;">Notes:</div>
<div style="position:absolute;left:512px;top:564px;width:3px;height:3px;border-radius:2px;background:#7f88c4"></div>
<div style="position:absolute;left:512px;top:576px;width:3px;height:3px;border-radius:2px;background:#7f88c4"></div>
<div style="position:absolute;left:525px;top:560px;font:normal 10.5px/10.5px 'Liberation Sans', sans-serif;color:#7077b9;white-space:nowrap;">Received and Delivered are local times on remote system.</div>
<div style="position:absolute;left:525px;top:572px;font:normal 10.5px/10.5px 'Liberation Sans', sans-serif;color:#7077b9;white-space:nowrap;">By Wire value is before compression, actual transfer typically smaller.</div>
</body></html>
